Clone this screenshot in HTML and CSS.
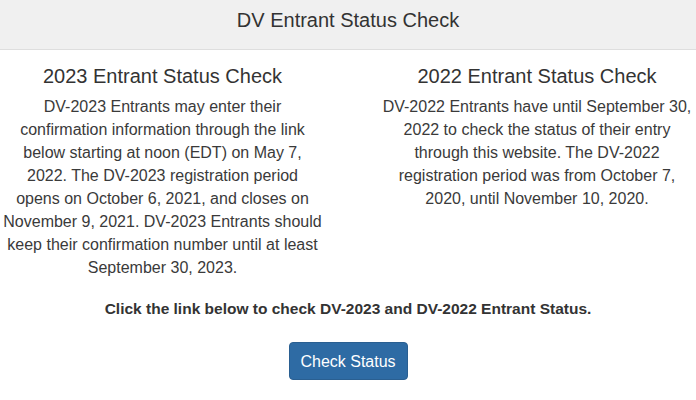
FILE: index.html
```html
<!DOCTYPE html>
<html lang="en">
<head>
  <meta charset="UTF-8">
  <meta name="viewport" content="width=device-width, initial-scale=1.0">
  <title>DV Entrant Status Check</title>
  <link rel="stylesheet" href="styles.css">
</head>
<body>
  <!-- CABECERA -->
  <div class="page-header">
    <h1>DV Entrant Status Check</h1>
  </div>

  <!-- DOS COLUMNAS -->
  <div class="columns">
    <div class="column">
      <h2>2023 Entrant Status Check</h2>
      <p>DV-2023 Entrants may enter their confirmation information through the link below starting at noon (EDT) on May 7, 2022. The DV-2023 registration period<br>opens on October 6, 2021, and closes on November 9, 2021. DV-2023 Entrants should keep their confirmation number until at least September 30, 2023.</p>
    </div>
    <div class="column">
      <h2>2022 Entrant Status Check</h2>
      <p>DV-2022 Entrants have until September 30, 2022 to check the status of their entry through this website. The DV-2022 registration period was from October 7, 2020, until November 10, 2020.</p>
    </div>
  </div>

  <!-- ENLACE -->
  <div class="action">
    <p class="action-text">Click the link below to check DV-2023 and DV-2022 Entrant Status.</p>
    <a class="btn-status" href="#">Check Status</a>
  </div>
</body>
</html>
```

FILE: styles.css
```css
body {
  margin: 0;
  padding: 0;
  background-color: white;
  color: #3a3a3a;
  font-family: 'Liberation Sans', Arial, sans-serif;
}

.page-header {
  background-color: #f0f0f0;
  border-bottom: 1px solid #dedede;
  padding: 8px 0 17px;
  text-align: center;
}

.page-header h1 {
  margin: 0;
  font-size: 20px;
  font-weight: normal;
  line-height: 24px;
  color: #333;
}

.columns {
  display: grid;
  grid-template-columns: 321px 1fr;
  column-gap: 55px;
  margin-top: 14px;
  padding-left: 2px;
}

.column {
  text-align: center;
}

.column h2 {
  margin: 0 0 7px;
  font-size: 20px;
  font-weight: normal;
  line-height: 24px;
  color: #333;
}

.column p {
  margin: 0;
  font-size: 16px;
  line-height: 23px;
}

.action {
  display: flex;
  flex-direction: column;
  align-items: center;
  margin-top: 20px;
}

.action-text {
  margin: 0 0 23px;
  font-size: 15.5px;
  font-weight: bold;
  line-height: 20px;
  color: #333;
}

.btn-status {
  display: block;
  width: 119px;
  height: 38px;
  line-height: 38px;
  text-align: center;
  background-color: #2e6ba4;
  border: 1px solid #2a5f91;
  box-sizing: border-box;
  border-radius: 4px;
  color: white;
  font-size: 16px;
  text-decoration: none;
}
```
